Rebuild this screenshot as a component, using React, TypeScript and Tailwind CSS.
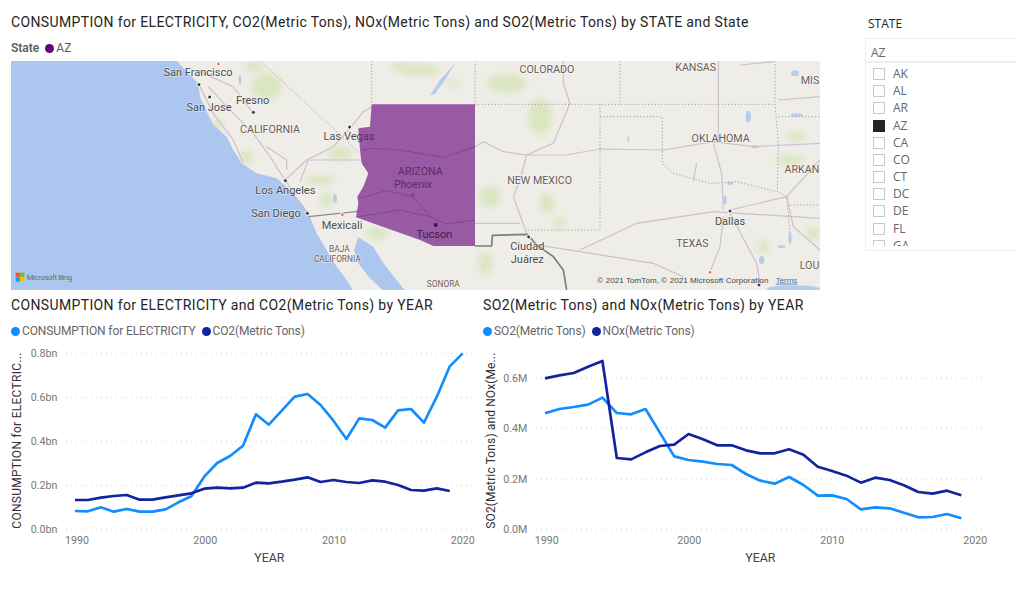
import React from "react";

const states = ["AK", "AL", "AR", "AZ", "CA", "CO", "CT", "DC", "DE", "FL", "GA"];

function MapLabel({ x, y, t, anchor = "middle", cls = "text-[32px] fill-[#6a5a5a]" }: { x: number; y: number; t: string; anchor?: "middle" | "end"; cls?: string }) {
  return (
    <text x={x} y={y} textAnchor={anchor} className={cls} stroke="#ffffff" strokeOpacity={0.5} strokeWidth={4} paintOrder="stroke">
      {t}
    </text>
  );
}

function Dot({ x, y, c = "#3a3a3a" }: { x: number; y: number; c?: string }) {
  return <circle cx={x} cy={y} r={6} fill={c} stroke="#fff" strokeWidth={3} />;
}

const city = "text-[33px] fill-[#4a4a4a]";

function MapArt() {
  const D = 1260;
  const greens: [number, number, number, number][] = [
    [800, 260, 45, 40], [760, 200, 30, 15], [1020, 460, 35, 22], [960, 540, 45, 14], [650, 375, 16, 16], [740, 470, 20, 20],
    [980, 600, 20, 20], [1130, 700, 35, 18], [1260, 210, 60, 18], [1200, 200, 25, 14],
    [D + 260, 250, 60, 28], [D + 360, 350, 35, 55], [D + 210, 590, 32, 32], [D + 380, 610, 22, 32], [D + 195, 790, 20, 35],
    [D + 100, 250, 20, 10], [D + 1130, 410, 30, 14], [D + 1110, 480, 45, 14], [D + 420, 670, 14, 20], [D + 1180, 700, 20, 20], [D + 1030, 740, 18, 20],
  ];
  const roads = [
    "M625,260 L700,340 L760,400 L810,470 L855,540",
    "M600,260 L640,340 L700,420 L730,490",
    "M855,540 L920,480 L1000,440 L1050,385 L1090,335 L1115,320",
    "M900,545 L925,480 L1090,480",
    "M860,545 L885,590 L925,640",
    "M800,440 L860,480 L860,510",
    "M600,215 L700,260 L760,340",
    `M${D + 165},440 L${D + 190},425 L${D + 250},455 L${D + 320},465 L${D + 440},465 L${D + 540},447 L${D + 730},450 L${D + 880},425 L${D + 1000},440 L${D + 1200},430`,
    `M${D + 880},430 L${D + 905},520 L${D + 910},630`,
    `M${D + 895},182 L${D + 895},420`,
    `M${D + 430},182 L${D + 430},250 L${D + 450},310 L${D + 400},430 L${D + 320},465 L${D + 300},540 L${D + 280},590 L${D + 320},700`,
    `M${D + 165},670 L${D + 300},670`,
    `M${D + 480},750 L${D + 650},670 L${D + 880},635 L${D + 1200},655`,
    `M${D + 350},735 L${D + 480},755 L${D + 700},790 L${D + 790},830`,
    `M${D + 910},650 L${D + 900},740 L${D + 870},815`,
    `M${D + 930},640 L${D + 1010},790 L${D + 1020},850`,
    `M${D + 930},630 L${D + 1100},590 L${D + 1200},480`,
    `M${D + 1100},590 L${D + 1120},680 L${D + 1200},750`,
    `M${D + 1075},300 L${D + 1200},290`,
    `M${D + 960},195 L${D + 1060},185`,
    `M${D + 830},490 L${D + 820},545`,
  ];
  const dotted = [
    "M780,182 L1080,460",
    "M1115,182 L1115,313",
    `M${D + 165},182 L${D + 165},313 L${D + 1065},313`,
    `M${D + 600},182 L${D + 600},313`,
    `M${D + 1065},182 L${D + 1065},313 L${D + 1075},430 L${D + 1072},575 L${D + 1100},590 L${D + 1110},700`,
    `M${D + 540},313 L${D + 540},690 L${D + 320},690`,
    `M${D + 540},350 L${D + 727},350 L${D + 727},490 L${D + 760},520 L${D + 870},550 L${D + 950},545 L${D + 1070},575`,
    `M${D + 1075},350 L${D + 1200},350`,
    `M${D + 1110},615 L${D + 1200},615`,
  ];
  return (
    <svg width={809} height={229} viewBox="33 183 2427 687" className="block font-['Roboto',sans-serif]">
      <defs>
        <filter id="b" x="-40%" y="-40%" width="180%" height="180%">
          <feGaussianBlur stdDeviation="10" />
        </filter>
      </defs>
      <rect x={33} y={182} width={2427} height={690} fill="#efede8" />
      <g filter="url(#b)" fill="#d3e3b3" fillOpacity={0.75}>
        {greens.map(([x, y, a, b], i) => (
          <ellipse key={i} cx={x} cy={y} rx={a} ry={b} />
        ))}
      </g>
      <polygon
        fill="#abc7f0"
        points="33,182 530,182 560,215 595,250 600,290 625,345 640,375 680,410 700,450 725,490 770,520 830,535 870,570 905,610 925,640 950,700 985,760 1010,800 1040,840 1060,872 33,872"
      />
      <polygon fill="#abc7f0" points="1075,712 1062,750 1075,790 1110,835 1150,872 1215,872 1150,790 1120,740" />
      <g fill="#b5cdec">
        <path d={`M${D + 30},285 L${D + 60},240 L${D + 105},190 L${D + 75},240 L${D + 45},282 Z`} />
        <ellipse cx={D + 1120} cy={866} rx={80} ry={10} />
        <ellipse cx={D + 1125} cy={220} rx={12} ry={9} />
        <ellipse cx={D + 1130} cy={345} rx={18} ry={5} />
        <ellipse cx={D + 985} cy={350} rx={8} ry={18} />
        <ellipse cx={D + 1005} cy={440} rx={12} ry={5} />
        <ellipse cx={D + 930} cy={550} rx={10} ry={5} />
        <ellipse cx={D + 915} cy={600} rx={5} ry={14} />
        <ellipse cx={D + 1110} cy={715} rx={5} ry={18} />
        <ellipse cx={D + 1085} cy={740} rx={12} ry={4} />
        <ellipse cx={D + 1025} cy={780} rx={8} ry={12} />
        <ellipse cx={D + 625} cy={418} rx={3} ry={9} />
        <ellipse cx={720} cy={240} rx={4} ry={14} />
        <ellipse cx={1005} cy={595} rx={6} ry={14} />
      </g>
      <g fill="none" stroke="#cdbfcd" strokeWidth={3.5}>
        {roads.map((d, i) => (
          <path key={i} d={d} />
        ))}
      </g>
      <g fill="none" stroke="#a6a6a0" strokeWidth={3} strokeDasharray="4 6">
        {dotted.map((d, i) => (
          <path key={i} d={d} />
        ))}
      </g>
      <path d="M925,650 L1075,634" fill="none" stroke="#8c8c8c" strokeWidth={4} />
      <path
        d={`M${D + 165},738 L${D + 215},738 L${D + 217},706 L${D + 322},703 L${D + 350},735 L${D + 400},770 L${D + 430},810 L${D + 440},870`}
        fill="none"
        stroke="#7d7d7d"
        strokeWidth={5}
      />
      <MapLabel x={1641} y={218} t="COLORADO" />
      <MapLabel x={2087} y={213} t="KANSAS" />
      <MapLabel x={2458} y={251} t="MIS" anchor="end" />
      <MapLabel x={810} y={399} t="CALIFORNIA" />
      <MapLabel x={1619} y={551} t="NEW MEXICO" />
      <MapLabel x={2162} y={426} t="OKLAHOMA" />
      <MapLabel x={2458} y={519} t="ARKAN" anchor="end" />
      <MapLabel x={2077} y={742} t="TEXAS" />
      <MapLabel x={1018} y={757} t="BAJA" cls="text-[25px] fill-[#6a5a5a]" />
      <MapLabel x={1012} y={786} t="CALIFORNIA" cls="text-[25px] fill-[#6a5a5a]" />
      <MapLabel x={1330} y={862} t="SONORA" cls="text-[25px] fill-[#6a5a5a]" />
      <MapLabel x={2458} y={807} t="LOU" anchor="end" />
      <MapLabel x={594} y={228} t="San Francisco" cls={city} />
      <MapLabel x={627} y={332} t="San Jose" cls={city} />
      <MapLabel x={758} y={312} t="Fresno" cls={city} />
      <MapLabel x={1047} y={420} t="Las Vegas" cls={city} />
      <MapLabel x={856} y={582} t="Los Angeles" cls={city} />
      <MapLabel x={828} y={651} t="San Diego" cls={city} />
      <MapLabel x={1026} y={686} t="Mexicali" cls={city} />
      <MapLabel x={2190} y={675} t="Dallas" cls={city} />
      <MapLabel x={1582} y={751} t="Ciudad" cls={city} />
      <MapLabel x={1582} y={789} t="Juárez" cls={city} />
      <Dot x={597} y={254} />
      <Dot x={629} y={291} />
      <Dot x={760} y={337} />
      <Dot x={1049} y={381} />
      <Dot x={856} y={542} />
      <Dot x={922} y={640} />
      <Dot x={2190} y={633} />
      <Dot x={1586} y={711} />
      <Dot x={2277} y={855} />
      <Dot x={1027} y={644} c="#f47b3e" />
      <Dot x={655} y={192} c="#f47b3e" />
      <Dot x={2130} y={817} c="#f47b3e" />
      <polygon
        fill="#6a0d83"
        fillOpacity={0.66}
        points="1115,313 1425,313 1425,738 1300,738 1260,720 1068,652 1075,610 1072,590 1090,560 1105,520 1085,490 1080,450 1075,385 1110,380"
      />
      <g fill="none" stroke="#6a2b76" strokeOpacity={0.45} strokeWidth={3}>
        <path d="M1085,450 L1120,445 L1200,450 L1330,472 L1425,440" />
        <path d="M1075,595 L1160,572 L1240,590 L1290,650 L1340,672 L1425,660" />
        <path d="M1075,650 L1200,630 L1290,650" />
      </g>
      <text x={1261} y={525} textAnchor="middle" className="text-[32px] fill-[#5d2a63]">ARIZONA</text>
      <text x={1239} y={565} textAnchor="middle" className="text-[32px] fill-[#5d2a63]">Phoenix</text>
      <text x={1303} y={714} textAnchor="middle" className="text-[33px] fill-[#3c1f44]">Tucson</text>
      <circle cx={1238} cy={585} r={6} fill="#a23a7e" />
      <circle cx={1307} cy={675} r={6} fill="#3d1746" />
      <g>
        <rect x={47} y={818} width={12.5} height={12.5} fill="#f25022" />
        <rect x={60.5} y={818} width={12.5} height={12.5} fill="#7fba00" />
        <rect x={47} y={832} width={12.5} height={12.5} fill="#00a4ef" />
        <rect x={60.5} y={832} width={12.5} height={12.5} fill="#ffb900" />
        <text x={80} y={840} textLength={137} className="text-[23px] fill-[#6b6b6b]">Microsoft Bing</text>
      </g>
      <text x={D + 532} y={848} textLength={513} className="font-['Liberation_Sans',sans-serif] text-[24px] fill-[#444444]">© 2021 TomTom, © 2021 Microsoft Corporation</text>
      <text x={D + 1067} y={848} textLength={65} textDecoration="underline" className="font-['Liberation_Sans',sans-serif] text-[24px] fill-[#3f6fa8]">Terms</text>
    </svg>
  );
}

type ChartProps = {
  title: string;
  legend: [string, string];
  vx: number;
  width: number;
  x0: number;
  step: number;
  gridFrom: number;
  gridTo: number;
  ticks: [string, number][];
  labelX: number;
  yearLabels: [string, number][];
  yearTitleX: number;
  axisTitle: string;
  axisTitleX: number;
  series: [number[], number[]];
  textLen: number;
};

function Chart(p: ChartProps) {
  return (
    <div className="flex flex-col" style={{ width: p.width }}>
      <div className="h-[20px] whitespace-nowrap text-[14px] leading-[20px] tracking-[0.36px] text-[#252423]">{p.title}</div>
      <div className="mt-[8px] flex h-[16px] items-center gap-[6px] text-[12px] tracking-[-0.12px] text-[#666666]">
        <span className="flex items-center gap-[2px]">
          <span className="h-[9px] w-[9px] rounded-full bg-[#118dff]" />
          {p.legend[0]}
        </span>
        <span className="flex items-center gap-[2px]">
          <span className="h-[9px] w-[9px] rounded-full bg-[#12239e]" />
          {p.legend[1]}
        </span>
      </div>
      <svg width={p.width} height={235} viewBox={`${p.vx} 150 ${p.width * 3} 705`} className="mt-[1px] block">
        {p.ticks.map(([t, y]) => (
          <g key={t}>
            <line x1={p.gridFrom} x2={p.gridTo} y1={y} y2={y} stroke="#d4d4d4" strokeWidth={3} strokeDasharray="3 12" />
            <text x={p.labelX} y={y + 11} textAnchor="end" className="text-[32px] fill-[#777777]">{t}</text>
          </g>
        ))}
        {p.yearLabels.map(([t, x]) => (
          <text key={t} x={x} y={761} textAnchor="middle" className="text-[32px] fill-[#777777]">{t}</text>
        ))}
        <text x={p.yearTitleX} y={815} textAnchor="middle" className="text-[37px] fill-[#444444]">YEAR</text>
        <text transform={`translate(${p.axisTitleX},716) rotate(-90)`} textLength={p.textLen} className="text-[36px] fill-[#333333]">
          {p.axisTitle}
        </text>
        <polyline fill="none" stroke="#118dff" strokeWidth={8} strokeLinejoin="round" points={p.series[0].map((y, i) => `${p.x0 + i * p.step},${y}`).join(" ")} />
        <polyline fill="none" stroke="#12239e" strokeWidth={8} strokeLinejoin="round" points={p.series[1].map((y, i) => `${p.x0 + i * p.step},${y}`).join(" ")} />
      </svg>
    </div>
  );
}

export default function App() {
  return (
    <div className="h-[613px] w-[1016px] overflow-hidden bg-white pl-[11px] pt-[12px] font-['Roboto',sans-serif]">
      <div className="flex">
        <div className="flex w-[809px] flex-col">
          <div className="h-[20px] whitespace-nowrap text-[14px] leading-[20px] tracking-[0.36px] text-[#252423]">
            CONSUMPTION for ELECTRICITY, CO2(Metric Tons), NOx(Metric Tons) and SO2(Metric Tons) by STATE and State
          </div>
          <div className="mt-[8px] flex h-[16px] items-center text-[12px] text-[#605e5c]">
            <span className="mr-[6px] font-semibold">State</span>
            <span className="mr-[2px] h-[9px] w-[9px] rounded-full bg-[#6b007b]" />
            <span>AZ</span>
          </div>
          <div className="mt-[5px]">
            <MapArt />
          </div>
        </div>
        <div className="ml-[45px] flex w-[151px] flex-col pt-[4px] font-['Open_Sans',sans-serif]">
          <div className="h-[22px] pl-[3px] text-[12px] leading-[16px] text-[#252423]">STATE</div>
          <div className="h-[213px] border border-r-0 border-[#eeeeee]">
            <div className="flex h-[24px] items-center border-b-2 border-[#eeeeee] pl-[5px] pt-[5px] text-[12px] text-[#666666]">AZ</div>
            <div className="h-[183px] overflow-hidden pt-[2.4px]">
              {states.map((s) => (
                <div key={s} className="flex h-[17.2px] items-center pl-[7px] text-[12px] text-[#666666]">
                  <span className={s === "AZ" ? "mr-[8px] h-[12px] w-[12px] bg-[#252423]" : "mr-[8px] h-[12px] w-[12px] border border-[#c8c8c8]"} />
                  {s}
                </div>
              ))}
            </div>
          </div>
        </div>
      </div>
      <div className="mt-[5px] flex">
        <Chart
          title="CONSUMPTION for ELECTRICITY and CO2(Metric Tons) by YEAR"
          legend={["CONSUMPTION for ELECTRICITY", "CO2(Metric Tons)"]}
          vx={33}
          width={472}
          x0={225}
          step={38.77}
          gridFrom={198}
          gridTo={1420}
          ticks={[["0.8bn", 190], ["0.6bn", 322], ["0.4bn", 454], ["0.2bn", 586], ["0.0bn", 718]]}
          labelX={172}
          yearLabels={[["1990", 231], ["2000", 616], ["2010", 1002], ["2020", 1388]]}
          yearTitleX={808}
          axisTitle="CONSUMPTION for ELECTRIC..."
          axisTitleX={64}
          textLen={528}
          series={[
            [663, 664, 652, 665, 657, 665, 665, 658, 637, 619, 560, 519, 498, 467, 373, 404, 362, 320, 312, 345, 392, 447, 385, 390, 413, 361, 357, 398, 320, 229, 190],
            [630, 630, 623, 618, 615, 629, 629, 622, 616, 610, 596, 593, 595, 593, 578, 580, 575, 569, 562, 576, 570, 576, 579, 571, 575, 585, 600, 602, 595, 603],
          ]}
        />
        <Chart
          title="SO2(Metric Tons) and NOx(Metric Tons) by YEAR"
          legend={["SO2(Metric Tons)", "NOx(Metric Tons)"]}
          vx={9}
          width={520}
          x0={195}
          step={43.07}
          gridFrom={168}
          gridTo={1505}
          ticks={[["0.6M", 264], ["0.4M", 415], ["0.2M", 567], ["0.0M", 718]]}
          labelX={142}
          yearLabels={[["1990", 200], ["2000", 628], ["2010", 1057], ["2020", 1486]]}
          yearTitleX={841}
          axisTitle="SO2(Metric Tons) and NOx(Me..."
          axisTitleX={46}
          textLen={528}
          series={[
            [370, 357, 351, 344, 323, 369, 373, 357, 428, 499, 510, 515, 522, 525, 552, 572, 581, 561, 585, 617, 616, 627, 658, 652, 655, 668, 682, 681, 672, 685],
            [265, 256, 249, 230, 213, 504, 508, 487, 468, 464, 432, 448, 466, 466, 481, 490, 490, 478, 494, 530, 543, 557, 578, 563, 570, 586, 606, 611, 602, 616],
          ]}
        />
      </div>
    </div>
  );
}
